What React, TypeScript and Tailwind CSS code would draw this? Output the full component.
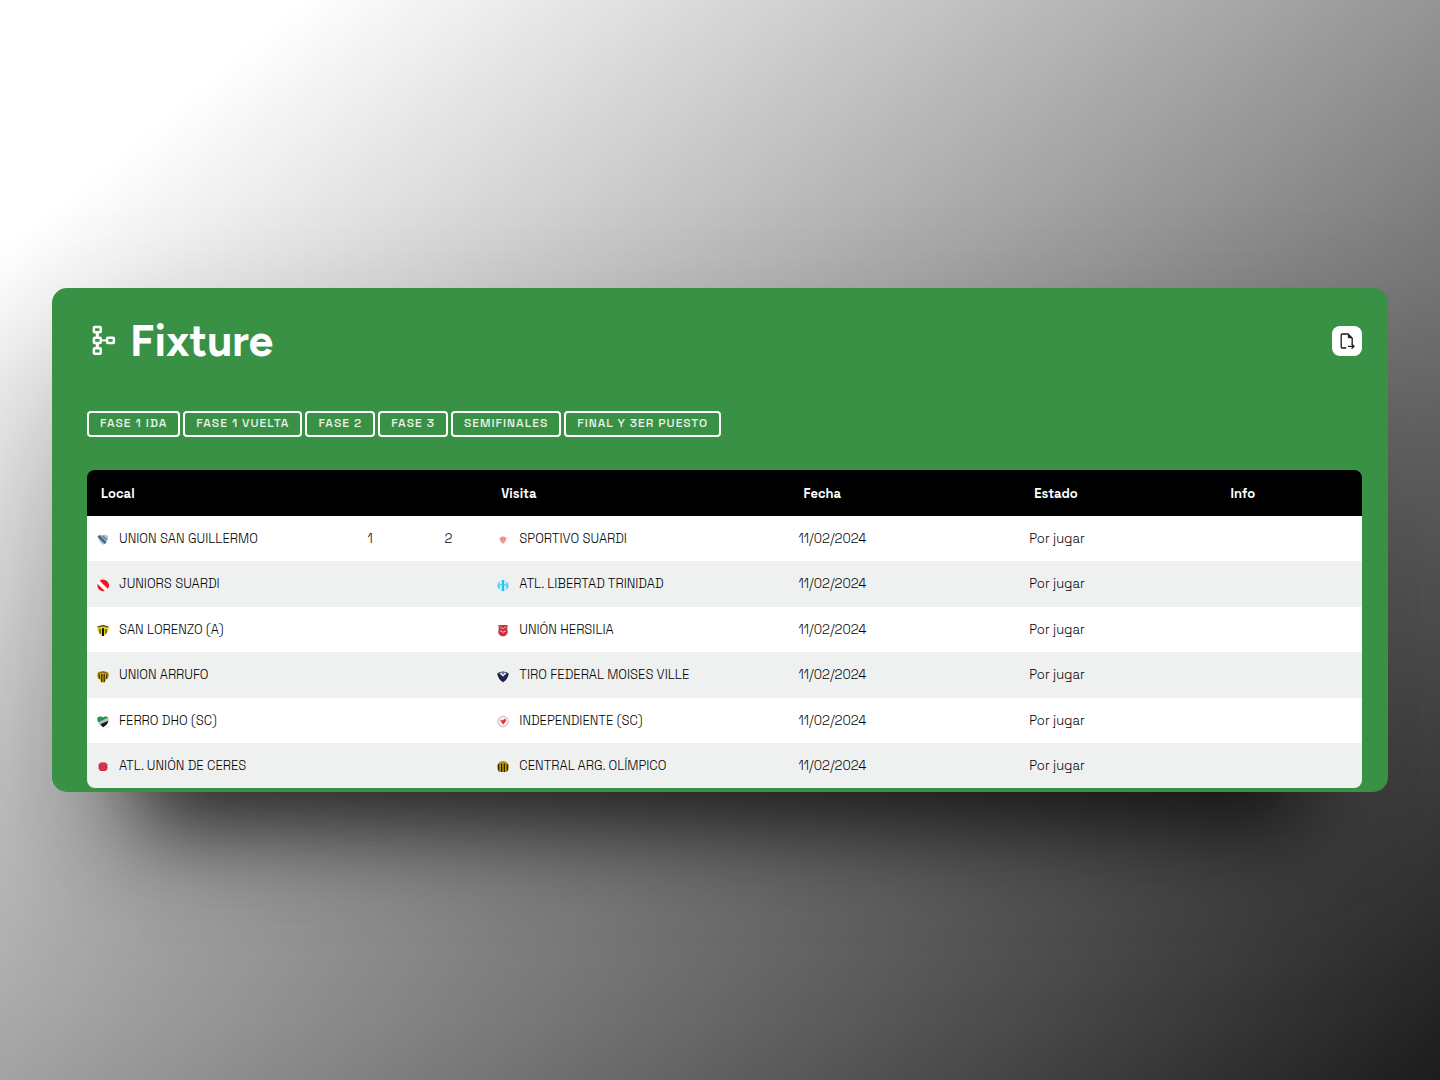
import type { ReactNode } from "react";

const crests: Record<string, ReactNode> = {
  guillermo: (
    <>
      <path d="M0.8 3.2C2 1.5 4.5 1.2 6 2.2C7.5 1.2 10 1.5 11.2 3.2C11.2 7 9 10 6.8 11.8C4 10.5 1 7.5 0.8 3.2Z" fill="#b3c4d6" />
      <path d="M1.5 2.8L8.6 10" stroke="#44658c" strokeWidth="2.6" />
      <path d="M5.5 2.8L10 7" stroke="#56779c" strokeWidth="1.2" />
    </>
  ),
  juniors: (
    <>
      <circle cx="6" cy="6.5" r="5.8" fill="#fff" />
      <path d="M2.6 1.8A5.8 5.8 0 0 1 10.8 9.8Z" fill="#f9121b" />
      <path d="M0.6 5L7.8 12A5.8 5.8 0 0 1 0.6 5Z" fill="#f9121b" />
    </>
  ),
  lorenzo: (
    <>
      <path d="M0.3 2.5L6 0.8L11.7 2.5C11.7 8 9 10.7 6 12.3C3 10.7 0.3 8 0.3 2.5Z" fill="#e0cf1c" />
      <path d="M3 5V9.5M9 5V9.5" stroke="#3a3610" strokeWidth="1.2" />
      <path d="M6 4.2V12" stroke="#16140a" strokeWidth="2" />
      <path d="M0.6 3L6 1.6L11.4 3" stroke="#4a4510" strokeWidth="1.2" fill="none" />
    </>
  ),
  arrufo: (
    <>
      <path d="M0.6 3C3.5 0.2 8.5 0.2 11.4 3C12.6 6.5 11 8.8 9 9.8L7.8 12.6H4.2L3 9.8C1 8.8 -0.6 6.5 0.6 3Z" fill="#cda212" />
      <path d="M2.2 4.2V8.8M4.8 4V12M7.2 4V12M9.8 4.2V8.8" stroke="#2b2108" strokeWidth="1.1" />
      <path d="M1 3.4Q6 0.4 11 3.4" stroke="#5f4a0c" strokeWidth="0.8" fill="none" />
    </>
  ),
  ferro: (
    <>
      <path d="M0.4 2.8C2.5 1 4.5 1.2 6 2.4C7.5 1.2 9.5 1 11.6 2.8C12 8 9 10.5 6.2 12.2C3 10.5 0 8 0.4 2.8Z" fill="#b9c0bc" />
      <path d="M0.4 2.8C2.5 1 4.5 1.2 6 2.4C7.5 1.2 9.5 1 11.2 2.6L1.4 7.2C0.5 5.5 0.3 4 0.4 2.8Z" fill="#1c9b50" />
      <path d="M3.4 9.2L11.3 5.8C10.8 9 8.5 11 6.2 12.2C5 11.3 4 10.4 3.4 9.2Z" fill="#141816" />
    </>
  ),
  ceres: (
    <>
      <path d="M3.6 2.4H8.4L10.4 4.4V9L8.4 11H3.6L1.6 9V4.4Z" fill="#a32d4c" />
      <path d="M4.2 3V10.4M6 2.8V10.6M7.8 3V10.4M2 5.2H10M2 8.2H10" stroke="#ee3350" strokeWidth="1.1" />
    </>
  ),
  sportivo: (
    <>
      <path d="M2.4 4.4L6 3.2L9.6 4.4C9.6 8 8 9.5 6 11C4 9.5 2.4 8 2.4 4.4Z" fill="#f5b4ba" />
      <path d="M4.3 4.4V8M6 3.8V10M7.7 4.4V8" stroke="#dd6672" strokeWidth="0.8" />
    </>
  ),
  libertad: (
    <>
      <circle cx="6" cy="6.5" r="5.6" fill="#a6e6fc" />
      <path d="M3.9 2.6V5M8.1 2.6V5M3.9 7V10.6M8.1 7V10.6" stroke="#eefaff" strokeWidth="1.2" />
      <path d="M6 1V12.2" stroke="#22c1f5" strokeWidth="2.2" />
      <path d="M1.6 4V9.2M10.4 4V9.2" stroke="#3fcbf7" strokeWidth="1.6" />
      <path d="M2.5 5.8H9.5" stroke="#45cbf6" strokeWidth="0.9" />
    </>
  ),
  hersilia: (
    <>
      <path d="M1.4 1H10.6L10.2 5.2C12 8.5 9.5 12.3 6 12.3C2.5 12.3 0 8.5 1.8 5.2Z" fill="#cc3140" />
      <path d="M2.8 2.6L6 4.8L9.2 2.6" stroke="#eab0b5" strokeWidth="0.9" fill="none" />
      <path d="M3 6.8Q6 9.8 9 6.8" stroke="#efbcc0" strokeWidth="1" fill="none" />
    </>
  ),
  tiro: (
    <>
      <path d="M0.4 3.2Q6 0 11.6 3.2C11.6 7 9 10.5 6 12.2C3 10.5 0.4 7 0.4 3.2Z" fill="#1d2450" />
      <path d="M2.4 3.2L6 6.8L9.6 3.2Q6 1.2 2.4 3.2Z" fill="#e3e6ee" />
      <path d="M4.6 2.6L6 4.6L7.4 2.6Z" fill="#2c3568" />
    </>
  ),
  independiente: (
    <>
      <circle cx="6" cy="6.5" r="5.3" fill="#f8eced" stroke="#cbb0b3" strokeWidth="0.9" />
      <path d="M2.8 4.6L5.6 5.4L8 3.6L9.2 5.4L6.4 9.6L5 8Z" fill="#e8323b" />
    </>
  ),
  central: (
    <>
      <path d="M2.5 2C5 0.6 7 0.6 9.5 2C12.6 4.8 12.6 8.2 10 12H2C-0.6 8.2 -0.6 4.8 2.5 2Z" fill="#bd9410" />
      <path d="M1.7 4V10.8M4.6 3.5V12M7.4 3.5V12M10.3 4V10.8" stroke="#2a2208" strokeWidth="1.2" />
    </>
  ),
};

const phases = ["FASE 1 IDA", "FASE 1 VUELTA", "FASE 2", "FASE 3", "SEMIFINALES", "FINAL Y 3ER PUESTO"];

const matches = [
  { home: "UNION SAN GUILLERMO", homeCrest: "guillermo", homeGoals: "1", awayGoals: "2", away: "SPORTIVO SUARDI", awayCrest: "sportivo" },
  { home: "JUNIORS SUARDI", homeCrest: "juniors", away: "ATL. LIBERTAD TRINIDAD", awayCrest: "libertad" },
  { home: "SAN LORENZO (A)", homeCrest: "lorenzo", away: "UNIÓN HERSILIA", awayCrest: "hersilia" },
  { home: "UNION ARRUFO", homeCrest: "arrufo", away: "TIRO FEDERAL MOISES VILLE", awayCrest: "tiro" },
  { home: "FERRO DHO (SC)", homeCrest: "ferro", away: "INDEPENDIENTE (SC)", awayCrest: "independiente" },
  { home: "ATL. UNIÓN DE CERES", homeCrest: "ceres", away: "CENTRAL ARG. OLÍMPICO", awayCrest: "central" },
];

function Team({ name, crest }: { name: string; crest: string }) {
  return (
    <div className="flex items-center gap-2.5">
      <svg viewBox="0 0 12 13" className="mt-0.5 h-[13px] w-3 shrink-0" aria-hidden="true">
        {crests[crest]}
      </svg>
      <span>{name}</span>
    </div>
  );
}

function TreeIcon() {
  return (
    <svg viewBox="0 0 24 32" className="h-8 w-6 shrink-0" fill="none" stroke="white" strokeWidth="2.5" aria-hidden="true">
      <rect x="1.9" y="1.9" width="6.8" height="5.4" rx="0.8" />
      <rect x="1.9" y="12.7" width="6.8" height="5.4" rx="0.8" />
      <rect x="1.9" y="23.3" width="6.8" height="5.4" rx="0.8" />
      <rect x="15.1" y="12.7" width="6.8" height="5.4" rx="0.8" />
      <path d="M5.3 8V12.5M5.3 18.5V23" strokeWidth="3" />
      <path d="M9 15.4H15" strokeWidth="2" />
    </svg>
  );
}

function ExportIcon() {
  return (
    <svg viewBox="0 0 16 18" className="h-[18px] w-4" fill="none" stroke="#1a1a1a" strokeWidth="1.3" strokeLinecap="round" strokeLinejoin="round" aria-hidden="true">
      <path d="M6.8 16H3.5Q2.2 16 2.2 14.7V3.3Q2.2 2 3.5 2H9L13.2 6.2V11.5" />
      <path d="M9.2 2.4V5.9H12.8Z" fill="#1a1a1a" strokeWidth="0.5" />
      <path d="M9.4 14.3H15M12.9 12.2L15 14.3L12.9 16.4" />
    </svg>
  );
}

export default function App() {
  return (
    <main className="flex min-h-screen items-center bg-[linear-gradient(140deg,#fff_11%,#1c1c1c_100%)] px-[52px] font-['Space_Grotesk',Roboto,sans-serif]">
      <section className="w-full rounded-[15px] bg-[#389144] pt-[31px] pr-[26px] pb-1 pl-[35px] shadow-[0_70px_150px_0_rgba(0,0,0,0.22),0_122px_80px_-88px_rgba(0,0,0,0.72)]">
        <header className="flex items-center justify-between">
          <h1 className="flex items-center gap-3.5 pl-[5px] font-[Figtree,Inter,sans-serif] text-[44px] leading-[44px] font-bold text-white">
            <TreeIcon />
            Fixture
          </h1>
          <button type="button" aria-label="Exportar" className="flex size-[30px] items-center justify-center rounded-lg bg-white">
            <ExportIcon />
          </button>
        </header>
        <nav aria-label="Fases" className="mt-12 flex gap-[3px]">
          {phases.map((phase) => (
            <button key={phase} type="button" className="h-[26px] rounded border-2 border-white px-[11px] pb-0.5 text-xs font-medium tracking-[1px] text-white/90">
              {phase}
            </button>
          ))}
        </nav>
        <div className="mt-[33px] overflow-hidden rounded-lg">
          <table className="w-full table-fixed border-collapse text-left text-[13px]">
            <colgroup>
              <col className="w-[19.1%]" />
              <col className="w-[6.2%]" />
              <col className="w-[6.1%]" />
              <col className="w-[23.7%]" />
              <col className="w-[18.1%]" />
              <col className="w-[15.4%]" />
              <col />
            </colgroup>
            <thead className="bg-black text-white">
              <tr className="h-[46px]">
                <th scope="colgroup" colSpan={3} className="px-3.5 pt-0.5 font-bold">Local</th>
                <th scope="col" className="px-3.5 pt-0.5 font-bold">Visita</th>
                <th scope="col" className="px-3.5 pt-0.5 font-bold">Fecha</th>
                <th scope="col" className="px-3.5 pt-0.5 font-bold">Estado</th>
                <th scope="col" className="px-3.5 pt-0.5 font-bold">Info</th>
              </tr>
            </thead>
            <tbody className="font-light text-black">
              {matches.map((m) => (
                <tr key={m.home} className="h-[45px] bg-white even:bg-[#eff1f1] even:not-last:h-[46px]">
                  <td className="pl-2.5 whitespace-nowrap"><Team name={m.home} crest={m.homeCrest} /></td>
                  <td className="text-center">{m.homeGoals}</td>
                  <td className="text-center">{m.awayGoals}</td>
                  <td className="pl-2.5 whitespace-nowrap"><Team name={m.away} crest={m.awayCrest} /></td>
                  <td className="pl-[9px]">11/02/2024</td>
                  <td className="pl-[9px]">Por jugar</td>
                  <td />
                </tr>
              ))}
            </tbody>
          </table>
        </div>
      </section>
    </main>
  );
}
